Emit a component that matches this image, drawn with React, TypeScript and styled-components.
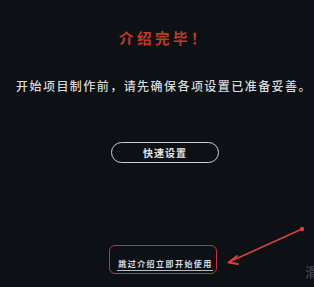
import React from 'react';
import styled, { createGlobalStyle } from 'styled-components';

const Global = createGlobalStyle`
  html, body {
    margin: 0;
    padding: 0;
    background: #0d1116;
  }
  #root {
    width: 314px;
    height: 287px;
  }
`;

const Screen = styled.div`
  position: relative;
  width: 314px;
  height: 287px;
  overflow: hidden;
  background: #0d1116;
  display: flex;
  flex-direction: column;
  align-items: center;
  font-family: "Noto Sans CJK SC", "Noto Sans", sans-serif;
`;

const Title = styled.h1`
  margin: 28px 0 0 14px;
  font-size: 14.5px;
  line-height: 20px;
  font-weight: 700;
  letter-spacing: 3.5px;
  color: #c23a26;
`;

const Notice = styled.p`
  margin: 30px 0 0 14px;
  font-size: 12px;
  line-height: 16px;
  font-weight: 500;
  letter-spacing: 1.45px;
  color: #d9d9d9;
  white-space: nowrap;
`;

const SetupButton = styled.button`
  margin: 48px 0 0 16px;
  width: 108px;
  height: 21px;
  border: 1.5px solid #cfcfcf;
  border-radius: 11px;
  background: transparent;
  color: #e6e6e6;
  font-family: inherit;
  font-size: 10px;
  font-weight: 700;
  letter-spacing: 1px;
  display: flex;
  align-items: center;
  justify-content: center;
  padding: 0;
`;

const SkipFrame = styled.div`
  margin: 82px 0 0 12px;
  width: 108px;
  height: 29px;
  box-sizing: border-box;
  border: 1.5px solid #c2353a;
  border-radius: 6px;
  display: flex;
  align-items: flex-end;
  justify-content: center;
  padding: 0 0 2px 4px;
`;

const SkipLink = styled.span`
  font-size: 8px;
  line-height: 11px;
  font-weight: 700;
  letter-spacing: 1.45px;
  color: #dcdcdc;
  border-bottom: 1px solid #bdbdbd;
  padding: 0 0 1px 1px;
  white-space: nowrap;
`;

const Arrow = styled.svg`
  position: absolute;
  left: 220px;
  top: 222px;
`;

const Watermark = styled.span`
  position: absolute;
  left: 305px;
  top: 262px;
  font-size: 13px;
  color: #5a5f66;
  opacity: 0.8;
`;

export default function App() {
  return (
    <>
      <Global />
      <Screen>
        <Title>介绍完毕！</Title>
        <Notice>开始项目制作前，请先确保各项设置已准备妥善。</Notice>
        <SetupButton>快速设置</SetupButton>
        <SkipFrame>
          <SkipLink>跳过介绍立即开始使用</SkipLink>
        </SkipFrame>
        <Arrow width="90" height="50" viewBox="0 0 90 50">
          <circle cx="82" cy="7" r="2.2" fill="#d9403d" />
          <line x1="82" y1="7" x2="9" y2="40" stroke="#d9403d" strokeWidth="1.6" />
          <polyline points="17,34 8.5,40.5 18,42" fill="none" stroke="#d9403d" strokeWidth="1.8" strokeLinecap="round" strokeLinejoin="round" />
        </Arrow>
        <Watermark>滑</Watermark>
      </Screen>
    </>
  );
}
